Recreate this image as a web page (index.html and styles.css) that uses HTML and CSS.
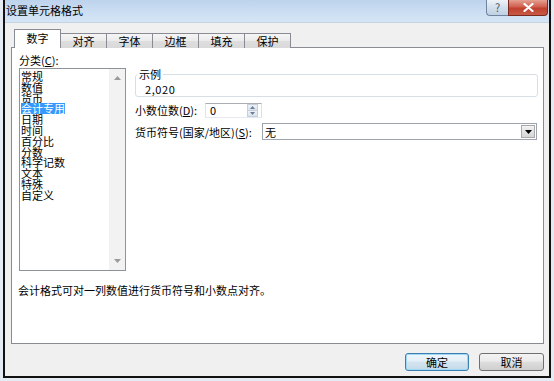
FILE: index.html
```html
<!DOCTYPE html>
<html lang="zh-CN">
<head>
<meta charset="utf-8">
<title>设置单元格格式</title>
<link rel="stylesheet" href="styles.css">
</head>
<body>
<div class="screen">
  <div class="dialog">
    <div class="titlebar">
      <span class="title">设置单元格格式</span>
      <div class="caption-btns">
        <span class="cap-help">?</span>
        <span class="cap-close"><svg width="11" height="9" viewBox="0 0 11 9"><path d="M1.5 1 L9.5 8 M9.5 1 L1.5 8" stroke="#fff" stroke-width="2.2" stroke-linecap="round" fill="none"/></svg></span>
      </div>
    </div>
    <div class="body">
      <div class="tabs">
        <div class="tab active">数字</div>
        <div class="tab">对齐</div>
        <div class="tab">字体</div>
        <div class="tab">边框</div>
        <div class="tab">填充</div>
        <div class="tab">保护</div>
      </div>
      <div class="panel">
        <div class="cols">
          <div class="left">
            <div class="lbl">分类(<u>C</u>):</div>
            <div class="listbox">
              <ul class="items">
                <li>常规</li>
                <li>数值</li>
                <li>货币</li>
                <li><span class="sel">会计专用</span></li>
                <li>日期</li>
                <li>时间</li>
                <li>百分比</li>
                <li>分数</li>
                <li>科学记数</li>
                <li>文本</li>
                <li>特殊</li>
                <li>自定义</li>
              </ul>
              <div class="vscroll">
                <svg width="7" height="4" viewBox="0 0 7 4"><path d="M0 4 L3.5 0 L7 4 Z" fill="#9a9a9a"/></svg>
                <svg width="7" height="4" viewBox="0 0 7 4"><path d="M0 0 L3.5 4 L7 0 Z" fill="#9a9a9a"/></svg>
              </div>
            </div>
          </div>
          <div class="right">
            <fieldset class="sample">
              <legend>示例</legend>
              <div class="sample-val">2,020</div>
            </fieldset>
            <div class="row spin-row">
              <span class="rlbl w1">小数位数(<u>D</u>):</span>
              <div class="spin">
                <span class="spin-val">0</span>
                <div class="spin-btns">
                  <span class="sb"><svg width="5" height="3" viewBox="0 0 5 3"><path d="M0 3 L2.5 0 L5 3 Z" fill="#6b7f99"/></svg></span>
                  <span class="sb"><svg width="5" height="3" viewBox="0 0 5 3"><path d="M0 0 L2.5 3 L5 0 Z" fill="#6b7f99"/></svg></span>
                </div>
              </div>
            </div>
            <div class="row combo-row">
              <span class="rlbl w2">货币符号(国家/地区)(<u>S</u>):</span>
              <div class="combo">
                <span class="combo-val">无</span>
                <span class="dd"><svg width="7" height="4" viewBox="0 0 7 4"><path d="M0 0 L3.5 4 L7 0 Z" fill="#000"/></svg></span>
              </div>
            </div>
          </div>
        </div>
        <p class="desc">会计格式可对一列数值进行货币符号和小数点对齐。</p>
      </div>
      <div class="buttons">
        <button class="btn default">确定</button>
        <button class="btn cancel">取消</button>
      </div>
    </div>
  </div>
</div>
</body>
</html>
```

FILE: styles.css
```css
* { box-sizing: border-box; }
html, body { margin: 0; padding: 0; }
body {
  width: 554px;
  height: 381px;
  overflow: hidden;
  background: #e4ebf3;
  font-family: "Noto Sans CJK SC", "Noto Sans", sans-serif;
  font-size: 11px;
  color: #000;
}
u { text-decoration: underline; text-underline-offset: 1px; }

.screen { padding-left: 3px; }

.dialog {
  width: 548px;
  border: 2px solid #121212;
  border-top: 0;
  background: #f0f0f0;
}

.titlebar {
  height: 23px;
  display: flex;
  justify-content: space-between;
  align-items: flex-start;
  background: linear-gradient(#bdd3ec 0%, #c9dcf1 45%, #d5e5f6 100%);
  border-bottom: 1px solid #c3d3e4;
}
.title {
  padding-left: 1px;
  line-height: 21px;
  font-size: 11px;
  color: #000;
}
.caption-btns { display: flex; margin-right: 1px; }
.cap-help {
  width: 22px;
  height: 16px;
  border: 1px solid #6f849e;
  border-top: 0;
  border-right: 0;
  border-radius: 0 0 0 4px;
  background: linear-gradient(#eef3f9, #d3dfec 50%, #c0d0e3);
  color: #4a5b70;
  font-size: 11px;
  line-height: 14px;
  text-align: center;
}
.cap-close {
  width: 40px;
  height: 16px;
  border: 1px solid #7b2a20;
  border-top: 0;
  border-radius: 0 0 4px 0;
  background: linear-gradient(#e4a092 0%, #d0604f 45%, #c0402f 55%, #c85a45 100%);
  display: flex;
  align-items: center;
  justify-content: center;
}

.body { padding: 6px 5px 5px 6px; }

.tabs {
  display: flex;
  align-items: flex-end;
  height: 19px;
  padding-left: 3px;
}
.tab {
  width: 47px;
  height: 15px;
  margin-left: -1px;
  border: 1px solid #898c95;
  border-bottom: 0;
  background: linear-gradient(#f5f5f5, #ebebeb 50%, #dedede 51%, #d9d9d9);
  text-align: center;
  line-height: 14px;
}
.tab.active {
  height: 19px;
  margin-left: 0;
  background: #fff;
  position: relative;
  z-index: 1;
  line-height: 17px;
}

.panel {
  margin-top: -1px;
  height: 297px;
  border: 1px solid #898c95;
  background: #fff;
  padding: 5px 5px 0 7px;
}
.cols { display: flex; }
.left { width: 107px; }
.lbl { line-height: 14px; height: 14px; }
.listbox {
  margin-top: 1px;
  height: 203px;
  border: 1px solid #8e939b;
  display: flex;
}
.items {
  flex: 1;
  list-style: none;
  margin: 0;
  padding: 2px 0 0 1px;
  line-height: 10.8px;
}
.items li { height: 10.8px; white-space: nowrap; }
.sel {
  display: inline-block;
  background: #3399ff;
  color: #fff;
  line-height: 11px;
}
.vscroll {
  width: 16px;
  background: #f2f2f2;
  display: flex;
  flex-direction: column;
  justify-content: space-between;
  align-items: center;
  padding: 7px 0 7px 0;
}

.right {
  flex: 1;
  margin-left: 9px;
  display: flex;
  flex-direction: column;
}
.sample {
  margin: 15px 0 0;
  padding: 0;
  border: 1px solid #d5dfe5;
  border-radius: 3px;
  min-width: 0;
}
.sample legend {
  margin-left: 1px;
  padding: 0 2px;
  line-height: 12px;
}
.sample-val {
  padding: 3px 0 1px 9px;
  line-height: 12px;
  letter-spacing: 0.6px;
}
.row { display: flex; align-items: center; margin-top: 5px; }
.rlbl { white-space: nowrap; }
.w1 { width: 70px; }
.w2 { width: 127px; }
.spin {
  width: 57px;
  height: 15px;
  border: 1px solid;
  border-color: #abadb3 #dbdfe6 #e3e9ef #e2e3ea;
  display: flex;
  align-items: center;
  background: #fff;
}
.spin-val { padding-left: 4px; line-height: 13px; }
.spin-btns {
  margin-left: auto;
  margin-right: 3px;
  width: 11px;
  height: 13px;
  display: flex;
  flex-direction: column;
}
.sb {
  flex: 1;
  display: flex;
  align-items: center;
  justify-content: center;
  background: linear-gradient(#eef2f7, #dbe3ec);
  border: 1px solid #c6d0dc;
}
.sb + .sb { border-top: 0; }
.combo {
  flex: 1;
  margin-right: 1px;
  height: 17px;
  border: 1px solid #9ea4ad;
  display: flex;
  align-items: center;
  background: #fff;
}
.combo-val { padding-left: 2px; line-height: 14px; }
.dd {
  margin-left: auto;
  margin-right: 1px;
  width: 14px;
  height: 13px;
  border: 1px solid #a9a9a9;
  background: linear-gradient(#f4f4f4, #e2e2e2 50%, #d6d6d6);
  display: flex;
  align-items: center;
  justify-content: center;
}

.desc {
  margin: 12px 0 0 -1px;
  line-height: 14px;
}

.buttons {
  display: flex;
  justify-content: flex-end;
  gap: 10px;
  margin-top: 9px;
}
.btn {
  height: 18px;
  width: 65px;
  padding: 0;
  border: 1px solid #707070;
  border-radius: 3px;
  background: linear-gradient(#f3f3f3 0%, #ebebeb 45%, #dddddd 50%, #cfcfcf 100%);
  font-family: "Noto Sans CJK SC", "Noto Sans", sans-serif;
  font-size: 11px;
  line-height: 16px;
  color: #000;
}
.btn.default {
  width: 64px;
  border-color: #3c7fb1;
  box-shadow: inset 0 0 0 1px #9fd8f4;
  background: linear-gradient(#eef6fb 0%, #e3eff7 45%, #d3e4ef 50%, #c5dbe9 100%);
}
```
